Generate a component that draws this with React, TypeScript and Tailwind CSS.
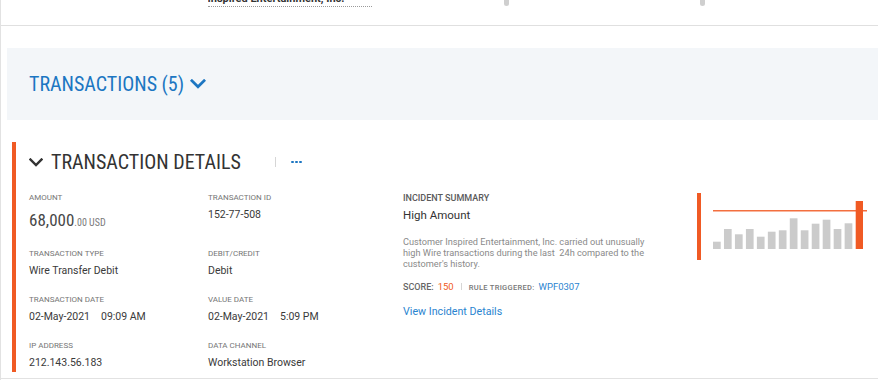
const bars = [7.3, 20, 14.7, 20, 12.3, 17.3, 18.7, 30.7, 18.7, 25.3, 29.3, 20, 25.7];

function Field({ label, children }: { label: string; children: React.ReactNode }) {
  return (
    <div>
      <div className="text-[8px] leading-[10px] text-[#767676] uppercase">{label}</div>
      <div className="mt-[4.5px] h-[14px] text-[10.5px] leading-[14px] text-[#3a3a3a]">{children}</div>
    </div>
  );
}

function Chevron({ className }: { className?: string }) {
  return (
    <svg viewBox="0 0 14 9" className={className} fill="none">
      <path d="M1.5 1.5 L7 7 L12.5 1.5" stroke="currentColor" strokeWidth="2.4" strokeLinecap="square" />
    </svg>
  );
}

function Spark() {
  return (
    <svg width="172" height="70" viewBox="0 0 172 70">
      <rect x="1" y="0" width="4" height="67" fill="#f05a24" />
      {bars.map((h, i) => (
        <rect key={i} x={17 + i * 10.97} y={56 - h} width="7.7" height={h} fill="#cbcbcb" />
      ))}
      <line x1="17" y1="17.7" x2="171" y2="17.7" stroke="#f36f3f" strokeWidth="1.6" />
      <rect x="159.7" y="8" width="7.3" height="48" fill="#f05a24" />
    </svg>
  );
}

export default function App() {
  return (
    <div className="w-[878px] h-[380px] bg-white overflow-hidden border-l border-[#e2e2e2] font-['Roboto',sans-serif]">
      {/* header strip, cut off at top */}
      <div className="h-[26px] border-b border-[#e0e0e0] flex items-start pl-[206.5px] overflow-hidden">
        <div className="-mt-[8px] w-[164px] h-[15px] pb-px border-b border-dotted border-[#9a9a9a] text-[11px] leading-[13px] font-bold text-[#333] whitespace-nowrap overflow-hidden">
          Inspired Entertainment, Inc.
        </div>
        <div className="ml-[132px] w-[5px] h-[6px] bg-[#cfcfcf] rounded-b-sm" />
        <div className="ml-[191px] w-[5px] h-[6px] bg-[#cfcfcf] rounded-b-sm" />
      </div>

      {/* transactions bar */}
      <div className="mt-[22px] ml-[6px] h-[72px] bg-[#f3f6f9] flex items-center pl-[22px]">
        <span className="text-[20px] leading-[24px] text-[#1c76c2] font-['Roboto_Condensed',Roboto,sans-serif]">
          TRANSACTIONS (5)
        </span>
        <Chevron className="ml-[6px] w-[16px] h-[10px] text-[#1c76c2]" />
      </div>

      {/* transaction card */}
      <div className="mt-[22px] pb-[6px] border-b border-[#e2e2e2]">
        <div className="ml-[11px] h-[230px] border-l-4 border-[#f05a24] pl-[13px] pt-[8px]">
          <div className="flex items-center h-[24px]">
            <Chevron className="w-[14px] h-[9px] text-[#333]" />
            <div className="ml-[8px] w-[224px] text-[20px] leading-[24px] text-[#333] font-['Roboto_Condensed',Roboto,sans-serif]">
              TRANSACTION DETAILS
            </div>
            <div className="w-px h-[10px] bg-[#d6d6d6]" />
            <div className="ml-[15px] flex gap-[1.5px]">
              <span className="w-[2.5px] h-[2.5px] rounded-full bg-[#1c76c2]" />
              <span className="w-[2.5px] h-[2.5px] rounded-full bg-[#1c76c2]" />
              <span className="w-[2.5px] h-[2.5px] rounded-full bg-[#1c76c2]" />
            </div>
          </div>

          <div className="mt-[19px] flex items-start">
            <div className="grid grid-cols-[179px_195px] gap-y-[17.5px]">
              <div>
                <div className="text-[8px] leading-[10px] text-[#767676] uppercase">Amount</div>
                <div className="mt-[4.5px] h-[24px] text-[17px] leading-[24px] text-[#474747] font-['Roboto_Condensed',Roboto,sans-serif]">
                  68,000<span className="text-[10px] text-[#7a7a7a]">.00 USD</span>
                </div>
              </div>
              <Field label="Transaction ID">152-77-508</Field>
              <Field label="Transaction Type">Wire Transfer Debit</Field>
              <Field label="Debit/Credit">Debit</Field>
              <Field label="Transaction Date">
                02-May-2021<span className="ml-[11px]">09:09 AM</span>
              </Field>
              <Field label="Value Date">
                02-May-2021<span className="ml-[11px]">5:09 PM</span>
              </Field>
              <Field label="IP Address">212.143.56.183</Field>
              <Field label="Data Channel">Workstation Browser</Field>
            </div>

            <div className="w-[294px]">
              <div className="text-[9px] leading-[11px] font-medium text-[#5a5a5a] uppercase">Incident Summary</div>
              <div className="mt-[3.8px] text-[11.5px] leading-[15px] text-[#333]">High Amount</div>
              <div className="mt-[12.8px] text-[9.2px] leading-[11px] text-[#8a8a8a]">
                <div>Customer Inspired Entertainment, Inc. carried out unusually</div>
                <div className="whitespace-pre">high Wire transactions during the last  24h compared to the</div>
                <div>customer's history.</div>
              </div>
              <div className="mt-[11.4px] flex items-baseline h-[14px] leading-[14px]">
                <span className="text-[9px] font-medium text-[#666]">SCORE:</span>
                <span className="ml-[4px] text-[9.5px] text-[#f05a24]">150</span>
                <span className="ml-[7px] self-center w-px h-[7px] bg-[#d6d6d6]" />
                <span className="ml-[7px] text-[7.5px] tracking-[0.3px] font-medium text-[#777]">RULE TRIGGERED:</span>
                <span className="ml-[4px] text-[9.5px] text-[#2a84d0]">WPF0307</span>
              </div>
              <div className="mt-[10.9px] text-[10.7px] leading-[14px] text-[#2a84d0]">View Incident Details</div>
            </div>

            <div className="-ml-px">
              <Spark />
            </div>
          </div>
        </div>
      </div>
    </div>
  );
}
